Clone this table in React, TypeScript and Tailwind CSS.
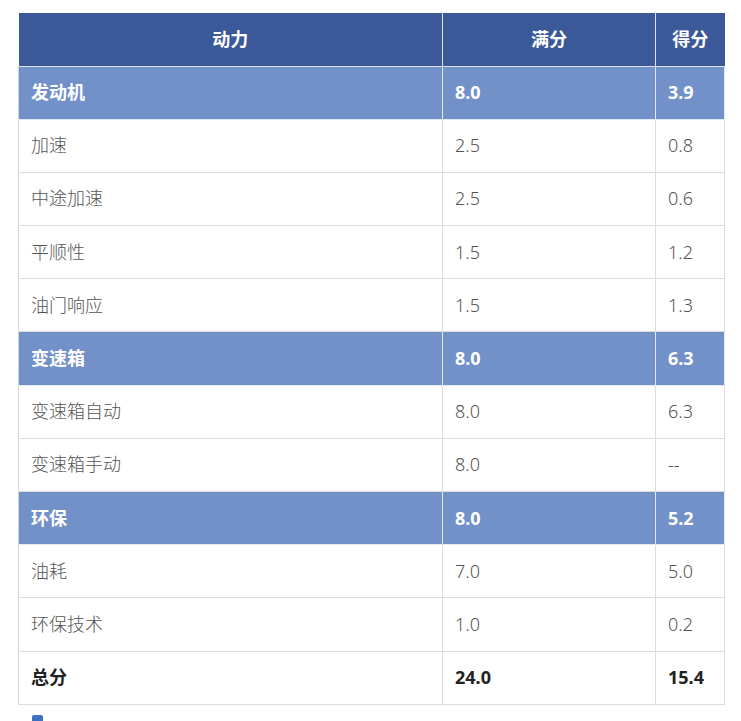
import type { ReactNode } from "react";

type Row = {
  name: string;
  full: string;
  score: string;
  kind: "group" | "item" | "total";
};

const rows: Row[] = [
  { name: "发动机", full: "8.0", score: "3.9", kind: "group" },
  { name: "加速", full: "2.5", score: "0.8", kind: "item" },
  { name: "中途加速", full: "2.5", score: "0.6", kind: "item" },
  { name: "平顺性", full: "1.5", score: "1.2", kind: "item" },
  { name: "油门响应", full: "1.5", score: "1.3", kind: "item" },
  { name: "变速箱", full: "8.0", score: "6.3", kind: "group" },
  { name: "变速箱自动", full: "8.0", score: "6.3", kind: "item" },
  { name: "变速箱手动", full: "8.0", score: "--", kind: "item" },
  { name: "环保", full: "8.0", score: "5.2", kind: "group" },
  { name: "油耗", full: "7.0", score: "5.0", kind: "item" },
  { name: "环保技术", full: "1.0", score: "0.2", kind: "item" },
  { name: "总分", full: "24.0", score: "15.4", kind: "total" },
];

function Cell({ children, first, kind }: { children: ReactNode; first?: boolean; kind: Row["kind"] }) {
  const tone =
    kind === "group"
      ? "bg-[#7391c9] text-white font-bold border-[#e4e8f0]"
      : kind === "total"
        ? "bg-white text-[#222] font-bold border-[#dcdcdc]"
        : "bg-white text-[#555] font-light border-[#dcdcdc]";
  return (
    <td
      className={`h-[53.2px] border px-3 align-middle text-[18px] ${tone} ${
        first ? "border-l-[#d4d4d4]" : ""
      }`}
    >
      {children}
    </td>
  );
}

export default function App() {
  return (
    <div
      className="min-h-[721px] bg-white pt-[13px] pl-[18px]"
      style={{ fontFamily: '"Noto Sans", "Noto Sans CJK SC", sans-serif' }}
    >
      <table className="w-[706px] table-fixed border-collapse">
        <colgroup>
          <col className="w-[424px]" />
          <col className="w-[213px]" />
          <col className="w-[69px]" />
        </colgroup>
        <thead>
          <tr className="bg-[#3b5998] text-[18px] font-bold text-white">
            <th className="h-[53px] border-b border-r border-[#dfe4ee] text-center">动力</th>
            <th className="h-[53px] border-b border-r border-[#dfe4ee] text-center">满分</th>
            <th className="h-[53px] border-b border-[#dfe4ee] text-center">得分</th>
          </tr>
        </thead>
        <tbody>
          {rows.map((row) => (
            <tr key={row.name}>
              <Cell first kind={row.kind}>
                {row.name}
              </Cell>
              <Cell kind={row.kind}>{row.full}</Cell>
              <Cell kind={row.kind}>{row.score}</Cell>
            </tr>
          ))}
        </tbody>
      </table>
      <div className="ml-[14px] mt-[10px] h-[8px] w-[11px] rounded-t-[2px] bg-[#3d6fc4]" />
    </div>
  );
}
